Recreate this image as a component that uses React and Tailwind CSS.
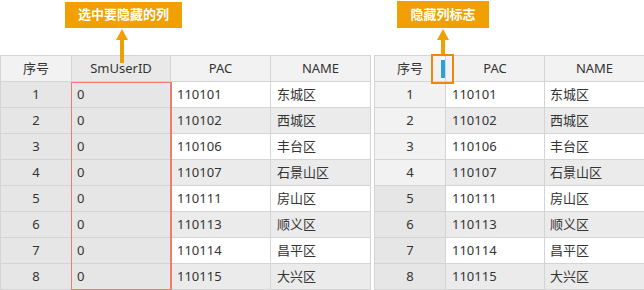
import React from "react";

const rows = [
  ["1", "110101", "东城区"],
  ["2", "110102", "西城区"],
  ["3", "110106", "丰台区"],
  ["4", "110107", "石景山区"],
  ["5", "110111", "房山区"],
  ["6", "110113", "顺义区"],
  ["7", "110114", "昌平区"],
  ["8", "110115", "大兴区"],
];

function LeftTable() {
  return (
    <div className="relative w-[371px] shrink-0 border-t border-l border-[#d4d4d4]">
      <div className="flex h-[26px] border-b border-[#d4d4d4] bg-[#f2f2f2]">
        <div className="w-[71px] border-r border-[#d4d4d4] flex items-center justify-center">序号</div>
        <div className="w-[99px] border-r border-[#d4d4d4] bg-[#e9e9e9] flex items-center justify-center">SmUserID</div>
        <div className="w-[100px] border-r border-[#d4d4d4] flex items-center justify-center">PAC</div>
        <div className="w-[100px] border-r border-[#d4d4d4] flex items-center justify-center">NAME</div>
      </div>
      {rows.map((r, i) => {
        const bg = i % 2 === 1 ? "bg-[#ebebeb]" : "bg-white";
        return (
          <div key={r[0]} className="flex h-[26px] border-b border-[#d4d4d4]">
            <div className="w-[71px] border-r border-[#d4d4d4] bg-[#e6e6e6] flex items-center justify-center">{r[0]}</div>
            <div className="w-[99px] border-r border-[#d4d4d4] bg-[#e6e6e6] flex items-center pl-[5px]">0</div>
            <div className={`w-[100px] border-r border-[#d4d4d4] ${bg} flex items-center pl-[6px]`}>{r[1]}</div>
            <div className={`w-[100px] border-r border-[#d4d4d4] ${bg} flex items-center pl-[6px]`}>{r[2]}</div>
          </div>
        );
      })}
      <div className="absolute left-[70px] top-[26px] w-[101px] bottom-0 border border-r-2 border-[#ee7d6d]" />
    </div>
  );
}

function RightTable() {
  return (
    <div className="relative w-[272px] shrink-0 border-t border-l border-[#d4d4d4]">
      <div className="flex h-[26px] border-b border-[#d4d4d4] bg-[#f2f2f2]">
        <div className="relative w-[71px] border-r border-[#d4d4d4] flex items-center justify-center">
          序号
          <div className="absolute right-0 top-[1px] bottom-[1px] w-[4px] bg-white flex items-center">
            <div className="w-[4px] h-[18px] bg-[#2b9fe0]" />
          </div>
        </div>
        <div className="w-[99px] border-r border-[#d4d4d4] flex items-center justify-center">PAC</div>
        <div className="w-[100px] border-r border-[#d4d4d4] flex items-center justify-center">NAME</div>
      </div>
      {rows.map((r, i) => {
        const bg = i % 2 === 1 ? "bg-[#ebebeb]" : "bg-white";
        const nbg = i < 4 ? "bg-[#f2f2f2]" : "bg-[#e6e6e6]";
        return (
          <div key={r[0]} className="flex h-[26px] border-b border-[#d4d4d4]">
            <div className={`w-[71px] border-r border-[#d4d4d4] ${nbg} flex items-center justify-center`}>{r[0]}</div>
            <div className={`w-[99px] border-r border-[#d4d4d4] ${bg} flex items-center pl-[6px]`}>{r[1]}</div>
            <div className={`w-[100px] border-r border-[#d4d4d4] ${bg} flex items-center pl-[5px]`}>{r[2]}</div>
          </div>
        );
      })}
    </div>
  );
}

function Arrow({ left, top, height }) {
  return (
    <div className="absolute flex flex-col items-center" style={{ left, top }}>
      <svg width="12" height="11" viewBox="0 0 12 11">
        <polygon points="6,0 12,11 0,11" fill="#f0a000" />
      </svg>
      <div className="w-[4px] bg-[#f0a000]" style={{ height }} />
    </div>
  );
}

export default function App() {
  return (
    <div className="relative w-[644px] h-[290px] overflow-hidden bg-white text-[13px] text-[#333] font-['Noto_Sans','Noto_Sans_CJK_SC',sans-serif]">
      <div className="flex gap-[3px] pt-[55px]">
        <LeftTable />
        <RightTable />
      </div>

      <div className="absolute left-[65px] top-[2px] w-[117px] h-[26px] bg-[#f0a000] text-white text-[13px] font-bold flex items-center justify-center">
        选中要隐藏的列
      </div>
      <Arrow left="116px" top="29px" height="23px" />

      <div className="absolute left-[397px] top-[1px] w-[92px] h-[27px] bg-[#f0a000] text-white text-[13px] font-bold flex items-center justify-center">
        隐藏列标志
      </div>
      <Arrow left="437px" top="29px" height="14px" />
      <div className="absolute left-[431px] top-[54px] w-[23px] h-[30px] border-2 border-[#ec8711]" />
    </div>
  );
}
